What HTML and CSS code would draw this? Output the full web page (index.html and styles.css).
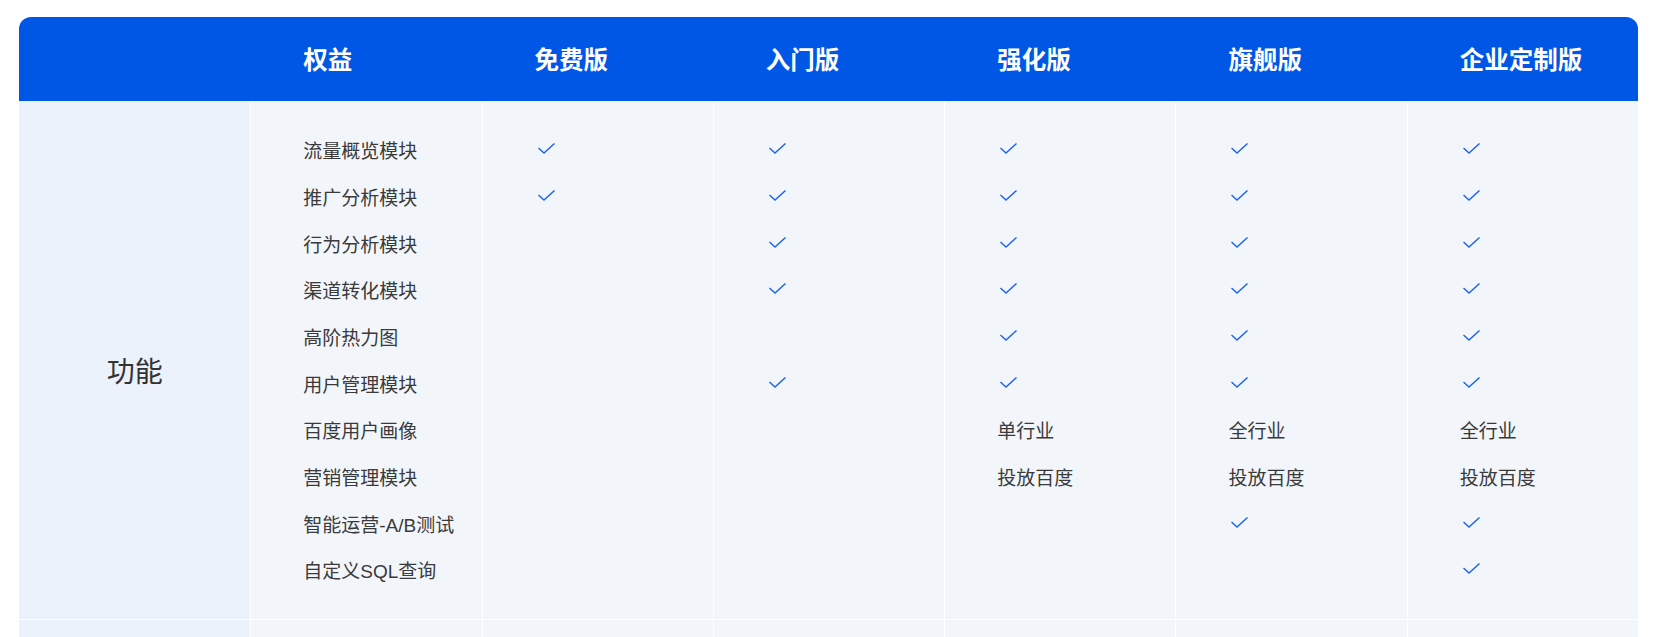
FILE: index.html
```html
<!DOCTYPE html>
<html lang="zh-CN">
<head>
  <meta charset="UTF-8">
  <meta name="viewport" content="width=device-width, initial-scale=1.0">
  <title>版本权益对比</title>
  <link rel="stylesheet" href="styles.css">
</head>
<body>

  <div class="plan-table">
    <div class="plan-head">
      <div class="head-cell"></div>
      <div class="head-cell">权益</div>
      <div class="head-cell">免费版</div>
      <div class="head-cell">入门版</div>
      <div class="head-cell">强化版</div>
      <div class="head-cell">旗舰版</div>
      <div class="head-cell">企业定制版</div>
    </div>

    <div class="plan-row">
      <div class="row-label">功能</div>

      <ul class="cell-list">
        <li>流量概览模块</li>
        <li>推广分析模块</li>
        <li>行为分析模块</li>
        <li>渠道转化模块</li>
        <li>高阶热力图</li>
        <li>用户管理模块</li>
        <li>百度用户画像</li>
        <li>营销管理模块</li>
        <li>智能运营-A/B测试</li>
        <li>自定义SQL查询</li>
      </ul>

      <!-- 免费版 -->
      <ul class="cell-list">
        <li><svg class="check" viewBox="0 0 17 11"><path d="M0.5 5 L6 10 L16.5 0.5"/></svg></li>
        <li><svg class="check" viewBox="0 0 17 11"><path d="M0.5 5 L6 10 L16.5 0.5"/></svg></li>
        <li></li>
        <li></li>
        <li></li>
        <li></li>
        <li></li>
        <li></li>
        <li></li>
        <li></li>
      </ul>

      <!-- 入门版 -->
      <ul class="cell-list">
        <li><svg class="check" viewBox="0 0 17 11"><path d="M0.5 5 L6 10 L16.5 0.5"/></svg></li>
        <li><svg class="check" viewBox="0 0 17 11"><path d="M0.5 5 L6 10 L16.5 0.5"/></svg></li>
        <li><svg class="check" viewBox="0 0 17 11"><path d="M0.5 5 L6 10 L16.5 0.5"/></svg></li>
        <li><svg class="check" viewBox="0 0 17 11"><path d="M0.5 5 L6 10 L16.5 0.5"/></svg></li>
        <li></li>
        <li><svg class="check" viewBox="0 0 17 11"><path d="M0.5 5 L6 10 L16.5 0.5"/></svg></li>
        <li></li>
        <li></li>
        <li></li>
        <li></li>
      </ul>

      <!-- 强化版 -->
      <ul class="cell-list">
        <li><svg class="check" viewBox="0 0 17 11"><path d="M0.5 5 L6 10 L16.5 0.5"/></svg></li>
        <li><svg class="check" viewBox="0 0 17 11"><path d="M0.5 5 L6 10 L16.5 0.5"/></svg></li>
        <li><svg class="check" viewBox="0 0 17 11"><path d="M0.5 5 L6 10 L16.5 0.5"/></svg></li>
        <li><svg class="check" viewBox="0 0 17 11"><path d="M0.5 5 L6 10 L16.5 0.5"/></svg></li>
        <li><svg class="check" viewBox="0 0 17 11"><path d="M0.5 5 L6 10 L16.5 0.5"/></svg></li>
        <li><svg class="check" viewBox="0 0 17 11"><path d="M0.5 5 L6 10 L16.5 0.5"/></svg></li>
        <li>单行业</li>
        <li>投放百度</li>
        <li></li>
        <li></li>
      </ul>

      <!-- 旗舰版 -->
      <ul class="cell-list">
        <li><svg class="check" viewBox="0 0 17 11"><path d="M0.5 5 L6 10 L16.5 0.5"/></svg></li>
        <li><svg class="check" viewBox="0 0 17 11"><path d="M0.5 5 L6 10 L16.5 0.5"/></svg></li>
        <li><svg class="check" viewBox="0 0 17 11"><path d="M0.5 5 L6 10 L16.5 0.5"/></svg></li>
        <li><svg class="check" viewBox="0 0 17 11"><path d="M0.5 5 L6 10 L16.5 0.5"/></svg></li>
        <li><svg class="check" viewBox="0 0 17 11"><path d="M0.5 5 L6 10 L16.5 0.5"/></svg></li>
        <li><svg class="check" viewBox="0 0 17 11"><path d="M0.5 5 L6 10 L16.5 0.5"/></svg></li>
        <li>全行业</li>
        <li>投放百度</li>
        <li><svg class="check" viewBox="0 0 17 11"><path d="M0.5 5 L6 10 L16.5 0.5"/></svg></li>
        <li></li>
      </ul>

      <!-- 企业定制版 -->
      <ul class="cell-list">
        <li><svg class="check" viewBox="0 0 17 11"><path d="M0.5 5 L6 10 L16.5 0.5"/></svg></li>
        <li><svg class="check" viewBox="0 0 17 11"><path d="M0.5 5 L6 10 L16.5 0.5"/></svg></li>
        <li><svg class="check" viewBox="0 0 17 11"><path d="M0.5 5 L6 10 L16.5 0.5"/></svg></li>
        <li><svg class="check" viewBox="0 0 17 11"><path d="M0.5 5 L6 10 L16.5 0.5"/></svg></li>
        <li><svg class="check" viewBox="0 0 17 11"><path d="M0.5 5 L6 10 L16.5 0.5"/></svg></li>
        <li><svg class="check" viewBox="0 0 17 11"><path d="M0.5 5 L6 10 L16.5 0.5"/></svg></li>
        <li>全行业</li>
        <li>投放百度</li>
        <li><svg class="check" viewBox="0 0 17 11"><path d="M0.5 5 L6 10 L16.5 0.5"/></svg></li>
        <li><svg class="check" viewBox="0 0 17 11"><path d="M0.5 5 L6 10 L16.5 0.5"/></svg></li>
      </ul>
    </div>

    <div class="plan-row plan-row-more">
      <div class="row-label"></div>
      <div class="cell-list"></div>
      <div class="cell-list"></div>
      <div class="cell-list"></div>
      <div class="cell-list"></div>
      <div class="cell-list"></div>
      <div class="cell-list"></div>
    </div>
  </div>

</body>
</html>
```

FILE: styles.css
```css
body {
  font-family: "Liberation Sans", "Noto Sans CJK SC", sans-serif;
  background: #fff;
  margin: 0;
  padding: 17px 17px 0 19px;
  color: #333;
}

.plan-table {
  width: 1619px;
}

.plan-head {
  display: grid;
  grid-template-columns: repeat(7, 1fr);
  height: 84px;
  background: #0057e6;
  border-radius: 12px 12px 0 0;
}

.head-cell {
  display: flex;
  align-items: center;
  padding: 0 0 2px 53px;
  color: #fff;
  font-size: 24.5px;
  font-weight: bold;
}

.plan-row {
  display: grid;
  grid-template-columns: repeat(7, 1fr);
}

.plan-row + .plan-row {
  margin-top: 1px;
}

.row-label {
  display: flex;
  align-items: center;
  justify-content: center;
  padding-top: 20px;
  background: #ebf2fb;
  font-size: 28px;
  color: #333;
}

.cell-list {
  list-style: none;
  margin: 0;
  padding: 25.5px 0 25.5px 52px;
  background: #f2f6fb;
  border-left: 1px solid #fff;
}

.cell-list li {
  display: flex;
  align-items: center;
  height: 46.67px;
  font-size: 19px;
  color: #3a3a3a;
}

.check {
  width: 17px;
  height: 11px;
  margin: -2px 0 0 3px;
  fill: none;
  stroke: #1a62f0;
  stroke-width: 1.4;
}

.plan-row-more {
  height: 60px;
}
```
